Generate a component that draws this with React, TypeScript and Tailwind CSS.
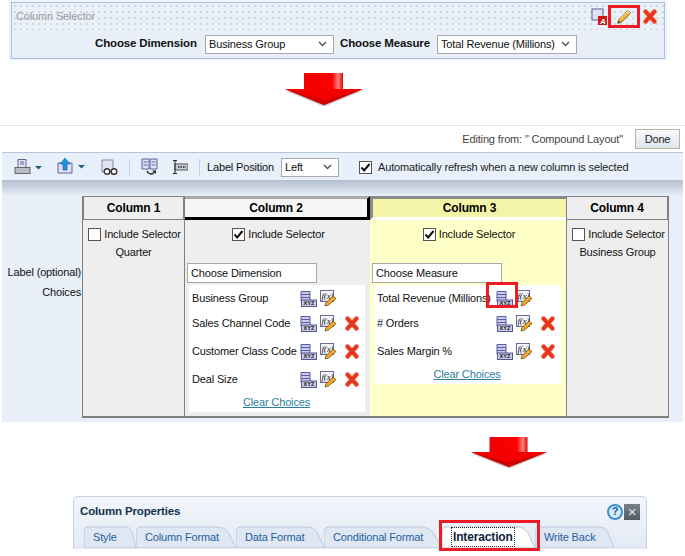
import type { ReactNode } from "react";

function RedX({ className = "" }: { className?: string }) {
  return (
    <svg width="14" height="15" viewBox="0 0 14 15" className={className}>
      <path d="M2.500 2.500 L11.500 12.500 M11.500 2.500 L2.500 12.500" stroke="#e8a08a" strokeWidth="5" strokeLinecap="round" />
      <path d="M2.500 2.500 L11.500 12.500 M11.500 2.500 L2.500 12.500" stroke="#e9321a" strokeWidth="3.400" strokeLinecap="round" />
    </svg>
  );
}

function Pencil() {
  return (
    <svg width="18" height="18" viewBox="0 0 20 20">
      <path d="M3 17 L4.500 12.500 L14.500 2.500 L17.500 5.500 L7.500 15.500 Z" fill="#f3b32a" stroke="#6a4a12" strokeWidth="0.900" />
      <path d="M5 12.500 L15 3" stroke="#fde9a0" strokeWidth="1" />
      <path d="M3 17 L4 14 L6 16 Z" fill="#333" />
      <path d="M14.500 2.500 L17.500 5.500 L16 7 L13 4 Z" fill="#e8d8a0" />
    </svg>
  );
}

function DataIcon() {
  return (
    <svg width="17" height="16" viewBox="0 0 17 16" className="shrink-0">
      <path d="M1 .5h9v10H1z" fill="#c7c9ee" stroke="#5c5f9e" />
      <path d="M1 3.500h9M1 6.500h9" stroke="#5c5f9e" />
      <rect x="1.500" y="9" width="15" height="6.500" fill="#c9cbe6" stroke="#55588f" />
      <text x="9" y="14.400" textAnchor="middle" fontSize="5.600" fontWeight="700" letterSpacing="0" fill="#111" fontFamily="Liberation Sans, sans-serif">XYZ</text>
    </svg>
  );
}

function FxIcon() {
  return (
    <svg width="17" height="17" viewBox="0 0 17 17" className="shrink-0">
      <rect x="0.500" y="0.500" width="13" height="11" fill="#f4f4fb" stroke="#6a6c9c" />
      <text x="1.500" y="9" fontSize="9" fontStyle="italic" fill="#111" fontFamily="Liberation Serif, serif">f(x)</text>
      <path d="M5 16 L6 12.500 L13 6 L16 8.500 L8.500 15 Z" fill="#f0a92c" stroke="#6b4a12" strokeWidth="0.800" />
    </svg>
  );
}

function Check({ on }: { on?: boolean }) {
  return (
    <span className="flex h-[13px] w-[13px] shrink-0 items-center justify-center border border-[#555] bg-white">
      {on ? (
        <svg width="11" height="11" viewBox="0 0 11 11">
          <path d="M1.500 5.500 L4.200 8.500 L9.500 2" fill="none" stroke="#111" strokeWidth="2" />
        </svg>
      ) : null}
    </span>
  );
}

function FakeSelect({ value, width }: { value: string; width: string }) {
  return (
    <div className={`flex h-[19px] items-center justify-between border border-[#a9a9a9] bg-white pl-[3px] pr-[6px] ${width}`}>
      <span>{value}</span>
      <svg width="9" height="6" viewBox="0 0 9 6">
        <path d="M1 1 L4.500 4.500 L8 1" fill="none" stroke="#555" strokeWidth="1.500" />
      </svg>
    </div>
  );
}

function DownArrow({ width, height, id }: { width: number; height: number; id: string }) {
  return (
    <svg width={width} height={height} viewBox="0 0 78 33" preserveAspectRatio="none" className="block">
      <defs>
        <linearGradient id={id} x1="0" x2="1" y1="0" y2="0">
          <stop offset="0" stopColor="#f00000" />
          <stop offset="0.72" stopColor="#ff0000" />
          <stop offset="0.88" stopColor="#ff8080" />
          <stop offset="1" stopColor="#e00000" />
        </linearGradient>
      </defs>
      <path d="M0 17 L39 33 L78 17 Z" fill="#c8c8c8" transform="translate(0 0.600)" />
      <path d="M19 0 H58 V16 H19 Z" fill={`url(#${id})`} />
      <path d="M0 16 H78 L39 32 Z" fill="#f40000" />
      <path d="M0 16 L39 32 L78 16 L39 27 Z" fill="#d00000" />
    </svg>
  );
}

function ChoiceRow({ label, removable = true, height }: { label: string; removable?: boolean; height: string }) {
  return (
    <div className={`flex items-center ${height}`}>
      <span className="flex-1 whitespace-nowrap">{label}</span>
      <div className="flex w-[65px] shrink-0 items-center gap-[3px]">
        <DataIcon />
        <FxIcon />
        {removable ? <RedX className="ml-[5px]" /> : null}
      </div>
    </div>
  );
}

function Column({ width, head, headClass, bodyClass, children, checked, caption }: {
  width: string;
  head: string;
  headClass: string;
  bodyClass: string;
  children?: ReactNode;
  checked?: boolean;
  caption?: string;
}) {
  return (
    <div className={`flex shrink-0 flex-col ${width} ${bodyClass}`}>
      <div className={`flex h-[24px] items-center justify-center text-[12px] font-bold text-black ${headClass}`}>{head}</div>
      <div className="flex h-[26px] items-center justify-center gap-[3px] pl-[2px] pt-[2px]">
        <Check on={checked} />
        <span>Include Selector</span>
      </div>
      {caption ? <div className="pt-[2px] text-center leading-[8px]">{caption}</div> : null}
      {children}
    </div>
  );
}

function Tab({ label, width, active }: { label: string; width: string; active?: boolean }) {
  return (
    <div className={`relative flex h-[22px] shrink-0 items-center pl-[9px] ${width}`}>
      <svg viewBox="0 0 100 22" preserveAspectRatio="none" className="absolute inset-0 h-full w-full">
        <path
          d="M0 22 V6 Q0 1 6 1 H82 Q88 1 92 6 L100 22 Z"
          fill={active ? "#ffffff" : "#dfe7f3"}
          stroke="#b9c9dc"
          vectorEffect="non-scaling-stroke"
        />
      </svg>
      {active ? (
        <span className="relative border border-dotted border-[#333] px-[1px] text-[12px] font-bold text-[#10243c]">{label}</span>
      ) : (
        <span className="relative text-[#1f5f9e]">{label}</span>
      )}
    </div>
  );
}

export default function App() {
  return (
    <div className="relative h-[556px] w-[685px] overflow-hidden bg-white font-['Liberation_Sans',sans-serif] text-[11px] tracking-[-0.15px] text-[#111]">
      {/* selector panel */}
      <section className="ml-[9px] h-[60px] w-[658px] bg-[#eef3fa] px-[2px] pt-[2px]">
        <div className="h-[57px] border border-[#a9c4e0] bg-[#e8eff8]">
          <div className="flex h-[27px] items-center justify-between bg-[#eaf0f8] bg-[radial-gradient(#cdd6e2_1px,transparent_1px)] bg-[length:6px_6px] pl-[4px] pr-[7px]">
            <span className="text-[#9a9a9a]">Column Selector</span>
            <div className="flex items-center">
              <svg width="16" height="17" viewBox="0 0 16 17">
                <rect x="1" y="1" width="11" height="11" fill="#dfe3f3" stroke="#5a5f99" />
                <rect x="7" y="8" width="9" height="9" fill="#cc1a10" />
                <text x="9" y="16" fontSize="8" fontWeight="700" fontStyle="italic" fill="#fff" fontFamily="Liberation Sans, sans-serif">A</text>
              </svg>
              <div className="ml-[1px] flex h-[23px] w-[32px] items-center justify-center border-[3px] border-[#ed1c24]">
                <Pencil />
              </div>
              <RedX className="ml-[3px]" />
            </div>
          </div>
          <div className="flex h-[28px] items-center pl-[83px] text-[11.500px]">
            <span className="w-[110px] font-bold">Choose Dimension</span>
            <FakeSelect value="Business Group" width="w-[129px] text-[11px]" />
            <span className="ml-[6px] w-[97px] font-bold">Choose Measure</span>
            <FakeSelect value="Total Revenue (Millions)" width="w-[140px] text-[11px]" />
          </div>
        </div>
      </section>

      <div className="ml-[285px] mt-[13px] h-[52px]">
        <DownArrow width={78} height={33} id="arrow-a" />
      </div>

      {/* layout editor */}
      <section className="border-t border-[#e4e6ee]">
        <div className="flex h-[26px] items-center justify-end pr-[5px] text-[#444]">
          <span className="mr-[12px]">Editing from: " Compound Layout"</span>
          <button className="flex h-[20px] w-[45px] items-center justify-center border border-[#b8b69a] bg-gradient-to-b from-[#f8f8f8] to-[#dfe5f0] text-[#222]">
            Done
          </button>
        </div>
        <div className="mx-[2px] flex h-[28px] items-center border-t border-[#b9c5d6] bg-[#e8f0fb] pl-[12px] pt-[1px]">
          <svg width="28" height="16" viewBox="0 0 28 16">
            <path d="M4 .5h8v8H4z" fill="#dfe3f3" stroke="#62668f" />
            <path d="M6 3h4M6 5h4" stroke="#62668f" />
            <rect x="1" y="8.500" width="15" height="6" fill="#b7bcc2" stroke="#666" />
            <path d="M21 7h7l-3.500 3.500z" fill="#265b7a" />
          </svg>
          <svg width="28" height="18" viewBox="0 0 28 18" className="ml-[15px]">
            <path d="M1 5h14v10H1z" fill="#dfe3f7" stroke="#5c61a0" />
            <path d="M8 0 L13 6 H10 V12 H6 V6 H3 Z" fill="#1f8fe0" stroke="#0f5da0" strokeWidth="0.600" />
            <path d="M21 7h7l-3.500 3.500z" fill="#265b7a" />
          </svg>
          <svg width="17" height="17" viewBox="0 0 17 17" className="ml-[16px]">
            <path d="M1 1h11v12H1z" fill="#dfe3f3" stroke="#8388a8" />
            <circle cx="6" cy="12.500" r="2.800" fill="#fff" stroke="#333" strokeWidth="1.400" />
            <circle cx="13" cy="12.500" r="2.800" fill="#fff" stroke="#333" strokeWidth="1.400" />
          </svg>
          <span className="ml-[11px] h-[17px] w-px bg-[#c3cfdd]" />
          <svg width="18" height="18" viewBox="0 0 18 18" className="ml-[11px]">
            <path d="M1 1h7v10H1zM9 1h7v10H9z" fill="#dfe3f7" stroke="#5c61a0" />
            <path d="M2.500 4h4M2.500 7h4M10.500 4h4M10.500 7h4" stroke="#5c61a0" />
            <path d="M6 13a4 4 0 0 0 7 1.500" fill="none" stroke="#222" strokeWidth="1.300" />
            <path d="M11 12.500 H15 V16z" fill="#222" />
          </svg>
          <svg width="16" height="14" viewBox="0 0 16 14" className="ml-[13px]">
            <rect x="3" y="4" width="13" height="6" fill="#c9cbd6" stroke="#555" />
            <path d="M6 7h8" stroke="#222" strokeDasharray="1.500 1" strokeWidth="1.500" />
            <path d="M1 .5h4M1 13.500h4M3 .5v13" stroke="#222" />
          </svg>
          <span className="ml-[11px] h-[17px] w-px bg-[#c3cfdd]" />
          <span className="ml-[7px]">Label Position</span>
          <FakeSelect value="Left" width="ml-[7px] w-[58px]" />
          <span className="ml-[20px]"><Check on /></span>
          <span className="ml-[6px] text-[#222]">Automatically refresh when a new column is selected</span>
        </div>
        <div className="mx-[2px] h-[16px] bg-gradient-to-b from-[#b4bfd0] to-[#e8eff9]" />
        <div className="mx-[2px] flex h-[226px] items-start bg-[#e8eff9]">
          <div className="h-[222px] w-[80px] shrink-0 pr-px pt-[66px] text-right leading-[20px]">
            <div>Label (optional)</div>
            <div>Choices</div>
          </div>
          <div className="flex h-[222px] border-b-2 border-[#808080]">
            <Column
              width="w-[103px]"
              head="Column 1"
              headClass="border-y border-x border-[#808080]"
              bodyClass="border-r border-l border-[#808080] bg-[#eeeeee]"
              caption="Quarter"
            />
            <Column
              width="w-[185px]"
              head="Column 2"
              headClass="border-t-[3px] border-b-[3px] border-r-[3px] border-t-[#aaaaaa] border-b-black border-r-black bg-[#f5f5f5]"
              bodyClass="bg-[#eeeeee]"
              checked
            >
              <div className="ml-[2px] mt-[17px] flex h-[20px] w-[130px] items-center border border-[#a9a9a9] bg-white pl-[3px]">Choose Dimension</div>
              <div className="ml-[4px] mt-[2px] h-[127px] w-[176px] bg-white pl-[3px] pt-[1px]">
                <ChoiceRow label="Business Group" removable={false} height="h-[25px]" />
                <ChoiceRow label="Sales Channel Code" height="h-[25px]" />
                <ChoiceRow label="Customer Class Code" height="h-[31px]" />
                <ChoiceRow label="Deal Size" height="h-[25px]" />
                <div className="pt-[2px] pr-[4px] text-center text-[#2b7f9e] underline">Clear Choices</div>
              </div>
            </Column>
            <Column
              width="w-[197px]"
              head="Column 3"
              headClass="border-t-[3px] border-b-[3px] border-l-[3px] border-t-[#8a8a8a] border-b-white border-l-[#8a8a8a] bg-[#f4f4a8]"
              bodyClass="border-r border-[#808080] bg-[#ffffc8]"
              checked
            >
              <div className="ml-[2px] mt-[17px] flex h-[20px] w-[130px] items-center border border-[#a9a9a9] bg-white pl-[3px]">Choose Measure</div>
              <div className="relative ml-[4px] mt-[2px] h-[99px] w-[187px] bg-white pl-[3px] pt-[1px]">
                <ChoiceRow label="Total Revenue (Millions)" removable={false} height="h-[25px]" />
                <ChoiceRow label="# Orders" height="h-[25px]" />
                <ChoiceRow label="Sales Margin %" height="h-[31px]" />
                <div className="-mt-[1px] pr-[4px] text-center text-[#2b7f9e] underline">Clear Choices</div>
                <span className="absolute left-[112px] top-[-3px] h-[26px] w-[32px] border-[3px] border-[#ed1c24]" />
              </div>
            </Column>
            <Column
              width="w-[102px]"
              head="Column 4"
              headClass="border-y border-r border-[#808080]"
              bodyClass="border-r border-[#808080] bg-[#eeeeee]"
              caption="Business Group"
            />
          </div>
        </div>
      </section>

      <div className="ml-[471px] mt-[15px]">
        <DownArrow width={76} height={31} id="arrow-b" />
      </div>

      {/* column properties dialog */}
      <section className="ml-[73px] mt-[28px] flex h-[53px] w-[574px] flex-col rounded-t-[5px] border border-b-0 border-[#c5d2e2] bg-gradient-to-b from-[#f3f6fb] to-[#e3eaf5]">
        <div className="flex h-[29px] items-center justify-between pl-[6px] pr-[6px]">
          <span className="text-[11.500px] font-bold text-[#12324f]">Column Properties</span>
          <div className="flex items-center gap-[1px]">
            <span className="flex h-[16px] w-[16px] items-center justify-center rounded-full border-2 border-[#3d8fd0] bg-[#d7ecfa] text-[11px] font-bold leading-none text-[#1d5f9c]">?</span>
            <span className="flex h-[16px] w-[16px] items-center justify-center bg-gradient-to-b from-[#77828c] to-[#4f5a64] text-[15px] leading-none text-[#e8e8e8]">×</span>
          </div>
        </div>
        <div className="flex pl-[10px]">
          <Tab label="Style" width="w-[52px]" />
          <Tab label="Column Format" width="w-[100px]" />
          <Tab label="Data Format" width="w-[88px]" />
          <Tab label="Conditional Format" width="w-[118px]" />
          <Tab label="Interaction" width="w-[93px]" active />
          <Tab label="Write Back" width="w-[79px]" />
        </div>
        <span className="absolute left-[439px] top-[520px] h-[31px] w-[101px] border-[3px] border-[#ed1c24]" />
      </section>
    </div>
  );
}
